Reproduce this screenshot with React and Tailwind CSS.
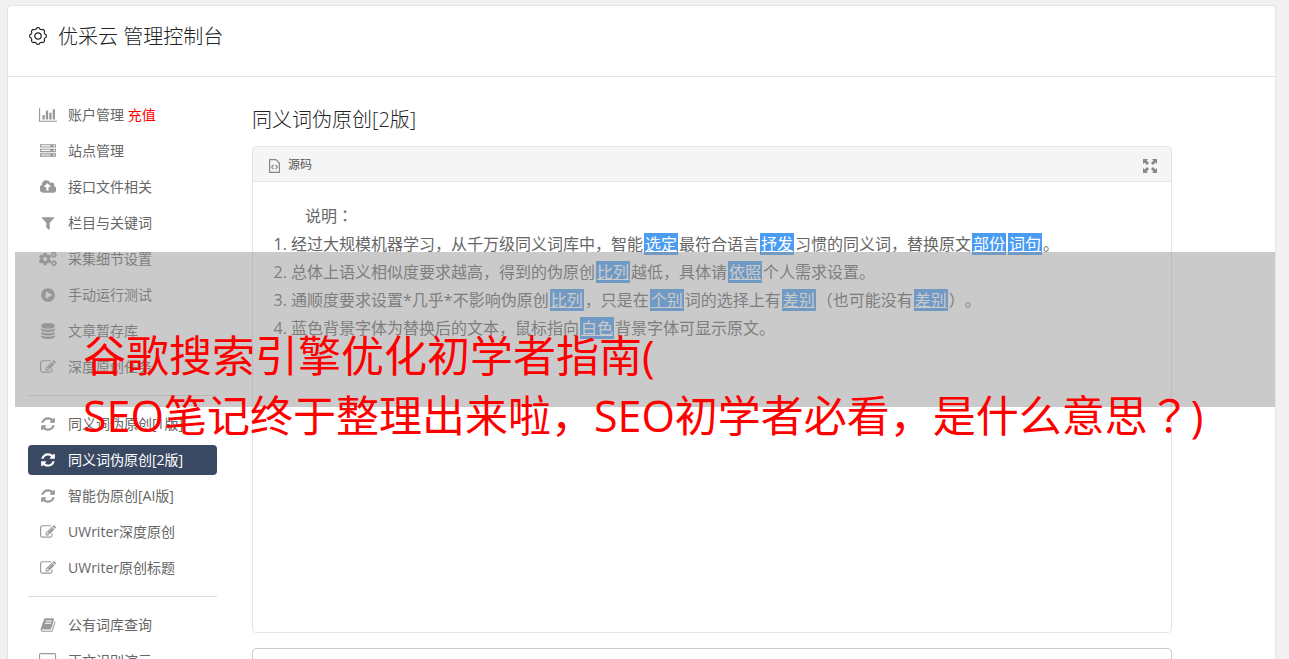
import React from "react";
import { FaCogs } from "react-icons/fa";

const ICONS = {
  chart: [2048, "M640 896v512h-256v-512h256zm384-512v1024h-256v-1024h256zm1024 1152v128h-2048v-1536h128v1408h1920zm-640-896v768h-256v-768h256zm384-384v1152h-256v-1152h256z"],
  server: [1792, "M128 1408h1024v-128h-1024v128zm0-512h1024v-128h-1024v128zm1568 448q0-40-28-68t-68-28-68 28-28 68 28 68 68 28 68-28 28-68zm-1568-960h1024v-128h-1024v128zm1568 448q0-40-28-68t-68-28-68 28-28 68 28 68 68 28 68-28 28-68zm0-512q0-40-28-68t-68-28-68 28-28 68 28 68 68 28 68-28 28-68zm96 832v384h-1792v-384h1792zm0-512v384h-1792v-384h1792zm0-512v384h-1792v-384h1792z"],
  cloud: [1856, "M1216 864q0-14-9-23l-352-352q-9-9-23-9t-23 9l-351 351q-10 12-10 24 0 14 9 23t23 9h224v352q0 13 9.5 22.5t22.5 9.5h192q13 0 22.5-9.5t9.5-22.5v-352h224q13 0 22.5-9.5t9.5-22.5zm640 288q0 159-112.5 271.5t-271.5 112.5h-1088q-185 0-316.5-131.5t-131.5-316.5q0-130 70-240t188-165q-2-30-2-43 0-212 150-362t362-150q156 0 285.5 87t188.5 231q71-62 166-62 106 0 181 75t75 181q0 76-41 138 130 31 213.5 135.5t83.5 238.5z"],
  filter: [1792, "M1595 295q17 41-14 70l-493 493v742q0 42-39 59-13 5-25 5-27 0-45-19l-256-256q-19-19-19-45v-486l-493-493q-31-29-14-70 17-39 59-39h1280q42 0 59 39z"],
  play: [1792, "M896 128q209 0 385.5 103t279.5 279.5 103 385.5-103 385.5-279.5 279.5-385.5 103-385.5-103-279.5-279.5-103-385.5 103-385.5 279.5-279.5 385.5-103zm384 823q32-18 32-55t-32-55l-544-320q-31-19-64-1-32 19-32 56v640q0 37 32 56 16 8 32 8 17 0 32-9z"],
  database: [1792, "M896 768q237 0 443-43t325-127v170q0 69-103 128t-280 93.5-385 34.5-385-34.5-280-93.5-103-128v-170q119 84 325 127t443 43zm0 768q237 0 443-43t325-127v170q0 69-103 128t-280 93.5-385 34.5-385-34.5-280-93.5-103-128v-170q119 84 325 127t443 43zm0-384q237 0 443-43t325-127v170q0 69-103 128t-280 93.5-385 34.5-385-34.5-280-93.5-103-128v-170q119 84 325 127t443 43zm0-1152q208 0 385 34.5t280 93.5 103 128v128q0 69-103 128t-280 93.5-385 34.5-385-34.5-280-93.5-103-128v-128q0-69 103-128t280-93.5 385-34.5z"],
  edit: [1792, "M888 1184l116-116-152-152-116 116v56h96v96h56zm440-720q-16-16-33 1l-350 350q-17 17-1 33t33-1l350-350q17-17 1-33zm80 594v190q0 119-84.5 203.5t-203.5 84.5h-832q-119 0-203.5-84.5t-84.5-203.5v-832q0-119 84.5-203.5t203.5-84.5h832q63 0 117 25 15 7 18 23 3 17-9 29l-49 49q-14 14-32 8-23-6-45-6h-832q-66 0-113 47t-47 113v832q0 66 47 113t113 47h832q66 0 113-47t47-113v-126q0-13 9-22l64-64q15-15 35-7t20 29zm-96-738l288 288-672 672h-288v-288zm444 132l-92 92-288-288 92-92q28-28 68-28t68 28l152 152q28 28 28 68t-28 68z"],
  refresh: [1792, "M1639 1056q0 5-1 7-64 268-268 434.5t-478 166.5q-146 0-282.5-55t-243.5-157l-129 129q-19 19-45 19t-45-19-19-45v-448q0-26 19-45t45-19h448q26 0 45 19t19 45-19 45l-137 137q71 66 161 102t187 36q134 0 250-65t186-179q11-17 53-117 8-23 30-23h192q13 0 22.5 9.5t9.5 22.5zm25-800v448q0 26-19 45t-45 19h-448q-26 0-45-19t-19-45 19-45l138-138q-148-137-349-137-134 0-250 65t-186 179q-11 17-53 117-8 23-30 23h-199q-13 0-22.5-9.5t-9.5-22.5v-7q65-268 270-434.5t480-166.5q146 0 284 55.5t245 156.5l130-129q19-19 45-19t45 19 19 45z"],
  book: [1792, "M1703 478q40 57 18 129l-275 906q-19 64-76.5 107.5t-122.5 43.5h-923q-77 0-148.5-53.5t-99.5-131.5q-24-67-2-127 0-4 3-27t4-37q1-8-3-21.5t-3-19.5q2-11 8-21t16.5-23.5 16.5-23.5q23-38 45-91.5t30-91.5q3-10 .5-30t-.5-28q3-11 17-28t17-23q21-36 42-92t25-90q1-9-2.5-32t.5-28q4-13 22-30.5t22-22.5q19-26 42.5-84.5t27.5-96.5q1-8-3-25.5t-2-26.5q2-8 9-18t18-23 17-21q8-12 16.5-30.5t15-35 16-36 19.5-32 26.5-23.5 36-11.5 47.5 5.5l-1 3q38-9 51-9h761q74 0 114 56t18 130l-274 906q-36 119-71.5 153.5t-128.5 34.5h-869q-27 0-38 15-11 16-1 43 24 70 144 70h923q29 0 56-15.5t35-41.5l300-987q7-22 5-57 38 15 59 43zm-1064 2q-4 13 2 22.5t20 9.5h608q13 0 25.5-9.5t16.5-22.5l21-64q4-13-2-22.5t-20-9.5h-608q-13 0-25.5 9.5t-16.5 22.5zm-83 256q-4 13 2 22.5t20 9.5h608q13 0 25.5-9.5t16.5-22.5l21-64q4-13-2-22.5t-20-9.5h-608q-13 0-25.5 9.5t-16.5 22.5z"],
  desktop: [1920, "M1792 992v-832q0-13-9.5-22.5t-22.5-9.5h-1600q-13 0-22.5 9.5t-9.5 22.5v832q0 13 9.5 22.5t22.5 9.5h1600q13 0 22.5-9.5t9.5-22.5zm128-832v1088q0 66-47 113t-113 47h-544q0 37 16 77.5t32 71 16 43.5q0 26-19 45t-45 19h-512q-26 0-45-19t-19-45q0-14 16-44t32-70 16-78h-544q-66 0-113-47t-47-113v-1088q0-66 47-113t113-47h1600q66 0 113 47t47 113z"],
};

function Icon({ name }) {
  if (name === "cogs") return <FaCogs className="h-4 w-[18px]" aria-hidden="true" />;
  const [width, path] = ICONS[name];
  return (
    <svg viewBox={`0 0 ${width} 1792`} className="h-4 w-auto shrink-0" fill="currentColor" aria-hidden="true">
      <path d={path} />
    </svg>
  );
}

function gearPath() {
  const points = [];
  for (let i = 0; i <= 160; i += 1) {
    const a = (i / 160) * Math.PI * 2;
    const r = 7.7 + 0.6 * Math.tanh(2.2 * Math.cos(8 * a));
    points.push(`${(10 + r * Math.sin(a)).toFixed(2)} ${(10 - r * Math.cos(a)).toFixed(2)}`);
  }
  return `M${points.join("L")}Z`;
}

const GROUPS = [
  [
    ["chart", "账户管理", "充值"],
    ["server", "站点管理"],
    ["cloud", "接口文件相关"],
    ["filter", "栏目与关键词"],
    ["cogs", "采集细节设置"],
    ["play", "手动运行测试"],
    ["database", "文章暂存库"],
    ["edit", "深度原创任务"],
  ],
  [
    ["refresh", "同义词伪原创[1版]"],
    ["refresh", "同义词伪原创[2版]"],
    ["refresh", "智能伪原创[AI版]"],
    ["edit", "UWriter深度原创"],
    ["edit", "UWriter原创标题"],
  ],
  [
    ["book", "公有词库查询"],
    ["desktop", "正文识别演示"],
  ],
];

const ACTIVE = "同义词伪原创[2版]";

function NavItem({ icon, label, extra }) {
  const active = label === ACTIVE;
  return (
    <li>
      <a
        href="#"
        aria-current={active ? "page" : undefined}
        className={
          active
            ? "flex h-[30px] items-center gap-2.5 rounded bg-[#394963] px-2.5 text-sm text-white"
            : "flex h-[30px] items-center gap-2.5 rounded px-2.5 text-sm text-[#666]"
        }
      >
        <span className={active ? "flex w-5 justify-center text-white" : "flex w-5 justify-center text-[#999]"}>
          <Icon name={icon} />
        </span>
        <span>
          {label}
          {extra && <span className="text-[#f00]"> {extra}</span>}
        </span>
      </a>
    </li>
  );
}

function Mark({ children }) {
  return <span className="mx-px bg-[#4a9cf2] px-px text-white underline">{children}</span>;
}

function CenteredPunctuation({ children }) {
  return (
    <span lang="zh-TW" className="font-['Noto_Sans_CJK_TC',sans-serif] leading-none">
      {children}
    </span>
  );
}

export default function App() {
  return (
    <div className="relative h-screen overflow-hidden bg-[#f1f1f1] px-[7px] pt-[5px] font-['Open_Sans','Noto_Sans_CJK_SC',sans-serif] [text-spacing-trim:space-all]" lang="zh-CN">
      <div className="mr-1.5 min-h-full rounded-t border border-[#e5e5e5] bg-white">
        <header className="flex h-[71px] items-start gap-2.5 border-b border-[#e5e5e5] px-5 pt-4 text-[#222]">
          <svg viewBox="0 0 20 20" className="mt-1 size-5" fill="none" stroke="currentColor" strokeWidth="1.2" aria-hidden="true">
            <path d={gearPath()} />
            <circle cx="10" cy="10" r="3.2" />
          </svg>
          <h1 className="text-xl leading-[30px] font-light">优采云 管理控制台</h1>
        </header>

        <div className="flex pl-5">
          <nav className="w-[189px] shrink-0 pt-[23px]">
            {GROUPS.map((group, i) => (
              <React.Fragment key={i}>
                {i > 0 && <hr className="my-[13px] border-[#ddd]" />}
                <ul className="flex flex-col gap-1.5">
                  {group.map(([icon, label, extra]) => (
                    <NavItem key={label} icon={icon} label={label} extra={extra} />
                  ))}
                </ul>
              </React.Fragment>
            ))}
          </nav>

          <main className="mr-[103px] ml-[35px] min-w-0 flex-1 pt-7">
            <h2 className="text-xl leading-[30px] font-light text-[#222]">同义词伪原创[2版]</h2>
            <section className="mt-[11px] min-h-[487px] rounded border border-[#e5e5e5]">
              <div className="flex h-[35px] items-center justify-between rounded-t border-b border-[#e5e5e5] bg-[#f5f5f5] pr-3.5 pl-4 text-[#555]">
                <button type="button" className="flex items-center gap-2 pt-0.5 text-xs">
                  <svg viewBox="0 0 11 14" className="mt-0.5 h-3.5 w-[11px]" fill="none" stroke="#888" strokeWidth="1.2" aria-hidden="true">
                    <path d="M.6.6H7L10.4 4V13.4H.6ZM4.6 5.8L2.6 8L4.6 10.2M6.4 5.8L8.4 8L6.4 10.2" />
                  </svg>
                  源码
                </button>
                <button type="button" aria-label="全屏" className="pt-1">
                  <svg viewBox="0 0 14 14" className="size-3.5" fill="#888" aria-hidden="true">
                    <path d="M0 0H5L3.5 1.5L6 4L4 6L1.5 3.5L0 5ZM14 0V5L12.5 3.5L10 6L8 4L10.5 1.5L9 0ZM0 14V9L1.5 10.5L4 8L6 10L3.5 12.5L5 14ZM14 14H9L10.5 12.5L8 10L10 8L12.5 10.5L14 9Z" />
                  </svg>
                </button>
              </div>
              <div className="pt-5 text-base leading-7 text-[#666]">
                <p className="pl-[52px]">
                  说明<CenteredPunctuation>：</CenteredPunctuation>
                </p>
                <ol className="list-decimal pl-[38px]">
                  <li>经过大规模机器学习，从千万级同义词库中，智能<Mark>选定</Mark>最符合语言<Mark>抒发</Mark>习惯的同义词，替换原文<Mark>部份</Mark><Mark>词句</Mark>。</li>
                  <li>总体上语义相似度要求越高，得到的伪原创<Mark>比列</Mark>越低，具体请<Mark>依照</Mark>个人需求设置。</li>
                  <li>通顺度要求设置*几乎*不影响伪原创<Mark>比列</Mark>，只是在<Mark>个别</Mark>词的选择上有<Mark>差别</Mark>（也可能没有<Mark>差别</Mark>）。</li>
                  <li>蓝色背景字体为替换后的文本，鼠标指向<Mark>白色</Mark>背景字体可显示原文。</li>
                </ol>
              </div>
            </section>
            <section className="mt-[15px] h-20 rounded border border-[#ccc]" />
          </main>
        </div>
      </div>

      <div className="absolute right-3.5 left-[15px] top-[252px] h-[155px] bg-[#969696]/50" />
      <p className="absolute top-[326px] left-[83px] text-[43px] leading-[60px] whitespace-nowrap text-[#f00]">
        谷歌搜索引擎优化初学者指南(
        <br />
        SEO笔记终于整理出来啦，SEO初学者必看，是什么意思<CenteredPunctuation>？</CenteredPunctuation>)
      </p>
    </div>
  );
}
